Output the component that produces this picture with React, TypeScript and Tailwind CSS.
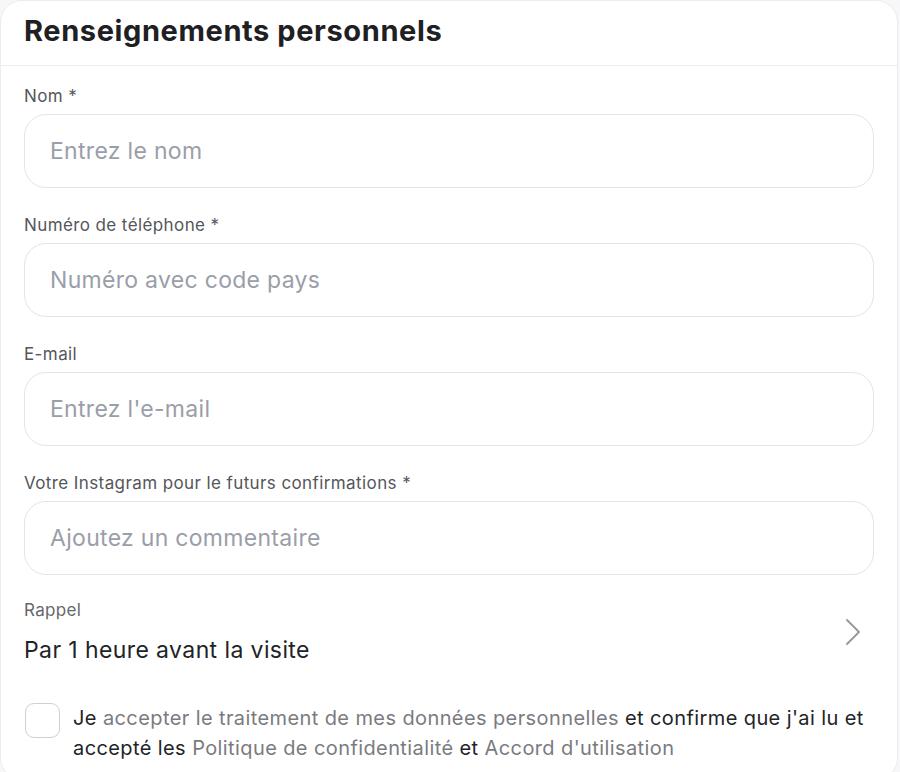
import React from "react";

const font = { fontFamily: "Inter, 'Noto Sans', sans-serif" };

function Field({ label, placeholder }: { label: string; placeholder: string }) {
  return (
    <div className="flex flex-col">
      <label className="text-[17px] leading-[20px] tracking-[0.4px] text-[#55565b]">{label}</label>
      <input
        placeholder={placeholder}
        className="mt-[8px] h-[74px] w-full rounded-[22px] border border-[#e3e4e8] bg-white px-[25px] text-[23px] tracking-[0.3px] text-[#222] outline-none placeholder:text-[#9a9ea8]"
      />
    </div>
  );
}

export default function App() {
  return (
    <div className="h-[772px] w-[900px] overflow-hidden bg-[#f7f7f9]" style={font}>
      <div className="h-[780px] w-[898px] rounded-[22px] border border-[#ececf0] bg-white">
        <div className="flex h-[65px] items-center border-b border-[#ececf0] px-[23px] pb-[5px]">
          <h1 className="text-[29px] font-bold leading-[34px] tracking-[0.6px] text-[#1f2023]">
            Renseignements personnels
          </h1>
        </div>
        <div className="flex flex-col gap-[27px] pl-[23px] pr-[23px] pt-[20px]">
          <Field label="Nom *" placeholder="Entrez le nom" />
          <Field label="Numéro de téléphone *" placeholder="Numéro avec code pays" />
          <Field label="E-mail" placeholder="Entrez l'e-mail" />
          <Field label="Votre Instagram pour le futurs confirmations *" placeholder="Ajoutez un commentaire" />
        </div>
        <div className="mt-[25px] flex items-center justify-between pl-[23px] pr-[36px]">
          <div className="flex flex-col">
            <span className="text-[17px] leading-[20px] tracking-[0.3px] text-[#66676c]">Rappel</span>
            <span className="mt-[16px] text-[23px] leading-[28px] tracking-[0.4px] text-[#222326]">
              Par 1 heure avant la visite
            </span>
          </div>
          <svg width="16" height="28" viewBox="0 0 16 28">
            <path d="M2 2 L14 14 L2 26" fill="none" stroke="#9a9a9e" strokeWidth="2" strokeLinecap="round" strokeLinejoin="round" />
          </svg>
        </div>
        <div className="mt-[39px] flex items-start gap-[13px] pl-[24px] pr-[24px]">
          <div className="h-[35px] w-[35px] shrink-0 rounded-[9px] border border-[#cfd0d4] bg-white" />
          <p className="text-[20px] leading-[30px] tracking-[0.4px] text-[#222326]">
            Je <span className="text-[#7a7b80]">accepter le traitement de mes données personnelles</span> et confirme que j'ai lu et accepté les{" "}
            <span className="text-[#7a7b80]">Politique de confidentialité</span> et{" "}
            <span className="text-[#7a7b80]">Accord d'utilisation</span>
          </p>
        </div>
      </div>
    </div>
  );
}
